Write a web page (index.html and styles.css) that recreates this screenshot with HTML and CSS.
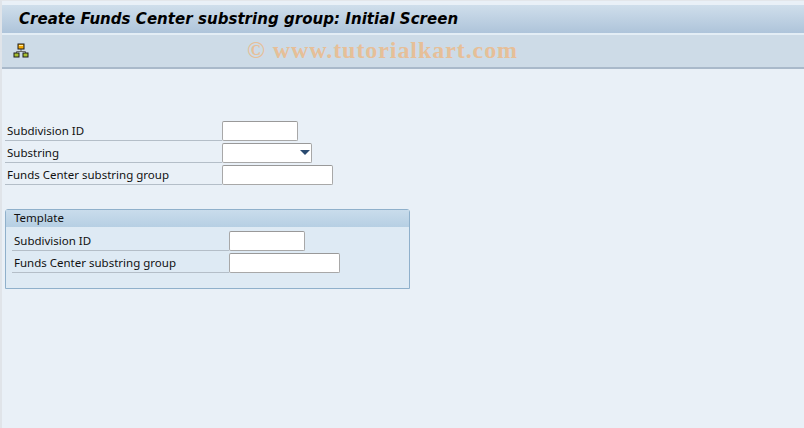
FILE: index.html
```html
<!DOCTYPE html>
<html lang="en">
<head>
  <meta charset="UTF-8" />
  <title>Create Funds Center substring group: Initial Screen</title>
  <link rel="stylesheet" href="styles.css">
</head>
<body>
  <div class="window">
    <div class="title-bar">
      <h1>Create Funds Center substring group: Initial Screen</h1>
    </div>
    <div class="toolbar">
      <svg class="icon" width="16" height="15" viewBox="0 0 16 15">
        <path d="M8 6v3M3.5 11V8.5h9V11" fill="none" stroke="#6b6b6b" stroke-width="1"/>
        <rect x="5" y="1" width="6" height="5" fill="#f5a800" stroke="#1c1c1c"/>
        <rect x="6" y="2" width="4" height="1" fill="#ffe9a0"/>
        <rect x="1" y="10" width="5" height="4" fill="#a8c030" stroke="#1c1c1c"/>
        <rect x="10" y="10" width="5" height="4" fill="#a8c030" stroke="#1c1c1c"/>
      </svg>
      <div class="watermark">© www.tutorialkart.com</div>
    </div>
    <div class="content">
      <div class="form">
        <div class="row">
          <label>Subdivision ID</label>
          <div class="input w-id"></div>
        </div>
        <div class="row">
          <label>Substring</label>
          <div class="input w-select"><span class="arrow"></span></div>
        </div>
        <div class="row">
          <label>Funds Center substring group</label>
          <div class="input w-group"></div>
        </div>
      </div>
      <div class="group-box">
        <div class="group-title">Template</div>
        <div class="group-body">
          <div class="row">
            <label>Subdivision ID</label>
            <div class="input w-id"></div>
          </div>
          <div class="row">
            <label>Funds Center substring group</label>
            <div class="input w-group"></div>
          </div>
        </div>
      </div>
    </div>
  </div>
</body>
</html>
```

FILE: styles.css
```css
html, body {
  margin: 0;
  padding: 0;
}

body {
  width: 804px;
  height: 428px;
  overflow: hidden;
  font-family: "Noto Sans", Arial, sans-serif;
  font-size: 11.5px;
  color: #111;
  background-color: #e9f0f7;
}

.window {
  height: 428px;
  box-sizing: border-box;
  padding-top: 4px;
  background-color: #e9f0f7;
  border-left: 2px solid #e0e4e9;
  border-top: 1px solid #e3e6ea;
  display: flex;
  flex-direction: column;
}

.title-bar {
  height: 30px;
  box-sizing: border-box;
  padding-left: 17px;
  display: flex;
  align-items: center;
  background: linear-gradient(#cfdeeb, #aec4da);
  border-bottom: 2px solid #e3edf5;
}

h1 {
  margin: 0;
  font-family: "DejaVu Sans", Arial, sans-serif;
  font-size: 15px;
  font-style: italic;
  font-weight: bold;
  letter-spacing: 0.04px;
  color: #000;
  white-space: nowrap;
}

.toolbar {
  position: relative;
  height: 34px;
  box-sizing: border-box;
  padding: 8px 0 0 11px;
  background-color: #cddbe7;
  border-bottom: 2px solid #a9b9ca;
}

.icon {
  display: block;
}

.watermark {
  position: absolute;
  left: 245px;
  top: 2px;
  font-family: "Liberation Serif", serif;
  font-size: 24px;
  font-weight: bold;
  letter-spacing: 0.93px;
  color: #e6bf98;
  white-space: nowrap;
}

.content {
  padding: 52px 0 0 3px;
}

.form {
  display: flex;
  flex-direction: column;
  gap: 2px;
}

.row {
  height: 20px;
  display: flex;
  align-items: flex-start;
}

.row label {
  width: 217px;
  height: 20px;
  box-sizing: border-box;
  padding: 2px 0 0 2px;
  line-height: 16px;
  border-bottom: 1px solid #b4bec8;
  white-space: nowrap;
}

.input {
  position: relative;
  height: 20px;
  box-sizing: border-box;
  background-color: #fff;
  border: 1px solid #a8a8a8;
  border-top-color: #999;
  border-radius: 2px;
}

.w-id { width: 76px; }
.w-select { width: 90px; }
.w-group { width: 111px; }

.arrow {
  position: absolute;
  right: 1px;
  top: 6px;
  border-left: 5px solid transparent;
  border-right: 5px solid transparent;
  border-top: 5px solid #2a4a70;
}

.group-box {
  width: 405px;
  box-sizing: border-box;
  margin-top: 24px;
  background-color: #deeaf4;
  border: 1px solid #8fb0cb;
  border-radius: 3px 3px 0 0;
}

.group-title {
  height: 17px;
  box-sizing: border-box;
  padding-left: 8px;
  line-height: 15px;
  background: linear-gradient(#c9dcec, #b6cfe3);
}

.group-body {
  height: 61px;
  box-sizing: border-box;
  padding: 4px 0 0 6px;
  display: flex;
  flex-direction: column;
  gap: 2px;
}
```
